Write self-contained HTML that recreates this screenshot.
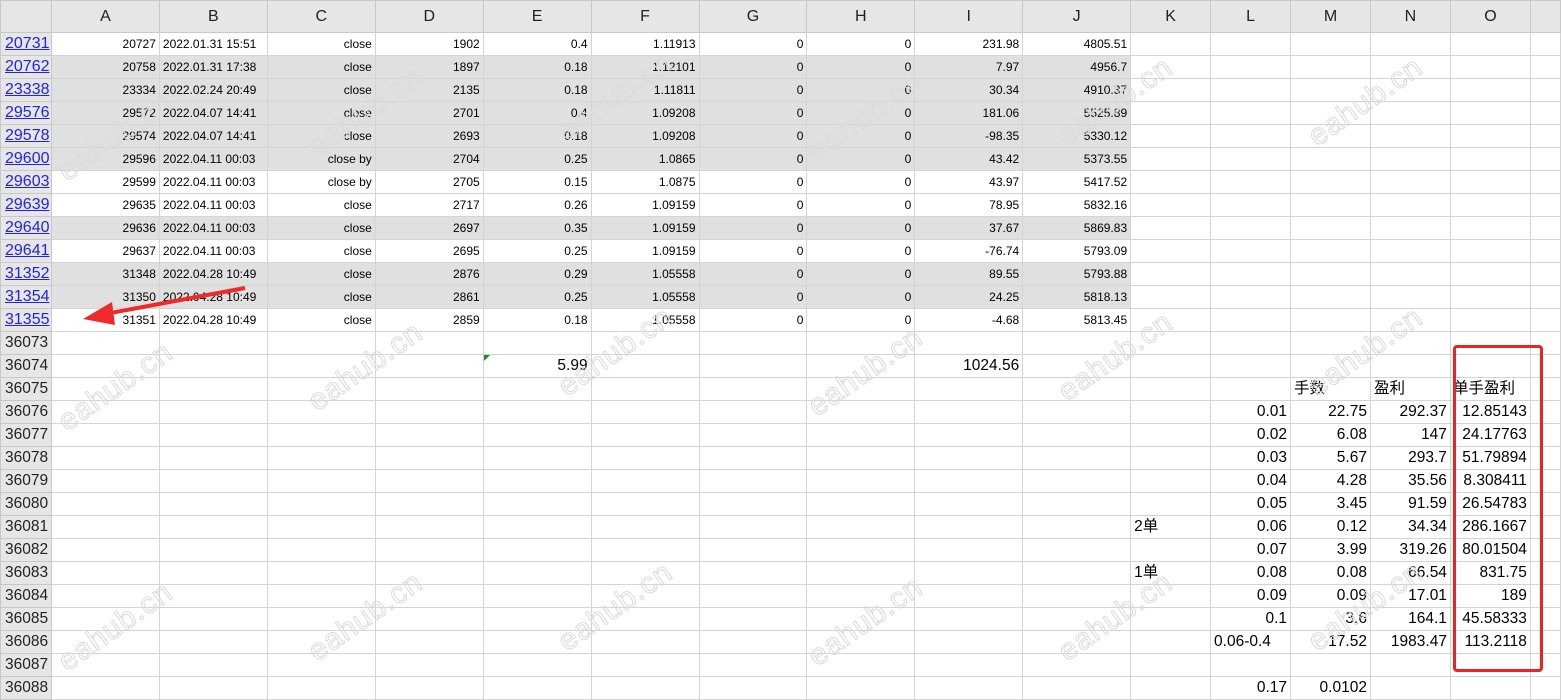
<!DOCTYPE html>
<html><head><meta charset="utf-8"><style>
body{margin:0;width:1561px;height:689px;overflow:hidden;background:#fff;font-family:"Liberation Sans","Noto Sans CJK SC",sans-serif;position:relative}
table{border-collapse:collapse;table-layout:fixed;position:absolute;left:0;top:0}
td{border:1px solid #d4d4d4;height:22px;padding:0 3px;white-space:nowrap;overflow:hidden;text-align:right;font-size:12px;color:#000;line-height:22px}
tr.h td{height:31px;background:#e6e6e6;text-align:center;font-size:16px;color:#222;border-color:#c8c8c8}
td.r{background:#e6e6e6;text-align:left;font-size:16px;padding:0 0 0 4px;border-color:#c8c8c8;color:#222}
td.l{color:#2222ee;text-decoration:underline}
tr.g td:not(.r):nth-child(-n+11){background:#e0e0e0}
tr.b td{font-size:15.5px}
td.t{text-align:left}
.wm{position:absolute;font-size:30px;color:transparent;-webkit-text-stroke:1px #dadada;transform:rotate(-35deg);font-family:"Liberation Sans",sans-serif;letter-spacing:1px}
</style></head><body>
<table>
<colgroup><col style="width:51px"><col style="width:108px"><col style="width:108px"><col style="width:108px"><col style="width:108px"><col style="width:108px"><col style="width:108px"><col style="width:108px"><col style="width:108px"><col style="width:108px"><col style="width:108px"><col style="width:80px"><col style="width:80px"><col style="width:80px"><col style="width:80px"><col style="width:80px"><col style="width:30px"></colgroup>
<tr class="h"><td style="background:#e6e6e6"></td><td>A</td><td>B</td><td>C</td><td>D</td><td>E</td><td>F</td><td>G</td><td>H</td><td>I</td><td>J</td><td>K</td><td>L</td><td>M</td><td>N</td><td>O</td><td></td></tr>
<tr><td class="r l">20731</td><td>20727</td><td class="t">2022.01.31 15:51</td><td>close</td><td>1902</td><td>0.4</td><td>1.11913</td><td>0</td><td>0</td><td>231.98</td><td>4805.51</td><td></td><td></td><td></td><td></td><td></td><td></td></tr>
<tr class="g"><td class="r l">20762</td><td>20758</td><td class="t">2022.01.31 17:38</td><td>close</td><td>1897</td><td>0.18</td><td>1.12101</td><td>0</td><td>0</td><td>7.97</td><td>4956.7</td><td></td><td></td><td></td><td></td><td></td><td></td></tr>
<tr class="g"><td class="r l">23338</td><td>23334</td><td class="t">2022.02.24 20:49</td><td>close</td><td>2135</td><td>0.18</td><td>1.11811</td><td>0</td><td>0</td><td>30.34</td><td>4910.37</td><td></td><td></td><td></td><td></td><td></td><td></td></tr>
<tr class="g"><td class="r l">29576</td><td>29572</td><td class="t">2022.04.07 14:41</td><td>close</td><td>2701</td><td>0.4</td><td>1.09208</td><td>0</td><td>0</td><td>181.06</td><td>5525.89</td><td></td><td></td><td></td><td></td><td></td><td></td></tr>
<tr class="g"><td class="r l">29578</td><td>29574</td><td class="t">2022.04.07 14:41</td><td>close</td><td>2693</td><td>0.18</td><td>1.09208</td><td>0</td><td>0</td><td>-98.35</td><td>5330.12</td><td></td><td></td><td></td><td></td><td></td><td></td></tr>
<tr class="g"><td class="r l">29600</td><td>29596</td><td class="t">2022.04.11 00:03</td><td>close by</td><td>2704</td><td>0.25</td><td>1.0865</td><td>0</td><td>0</td><td>43.42</td><td>5373.55</td><td></td><td></td><td></td><td></td><td></td><td></td></tr>
<tr><td class="r l">29603</td><td>29599</td><td class="t">2022.04.11 00:03</td><td>close by</td><td>2705</td><td>0.15</td><td>1.0875</td><td>0</td><td>0</td><td>43.97</td><td>5417.52</td><td></td><td></td><td></td><td></td><td></td><td></td></tr>
<tr><td class="r l">29639</td><td>29635</td><td class="t">2022.04.11 00:03</td><td>close</td><td>2717</td><td>0.26</td><td>1.09159</td><td>0</td><td>0</td><td>78.95</td><td>5832.16</td><td></td><td></td><td></td><td></td><td></td><td></td></tr>
<tr class="g"><td class="r l">29640</td><td>29636</td><td class="t">2022.04.11 00:03</td><td>close</td><td>2697</td><td>0.35</td><td>1.09159</td><td>0</td><td>0</td><td>37.67</td><td>5869.83</td><td></td><td></td><td></td><td></td><td></td><td></td></tr>
<tr><td class="r l">29641</td><td>29637</td><td class="t">2022.04.11 00:03</td><td>close</td><td>2695</td><td>0.25</td><td>1.09159</td><td>0</td><td>0</td><td>-76.74</td><td>5793.09</td><td></td><td></td><td></td><td></td><td></td><td></td></tr>
<tr class="g"><td class="r l">31352</td><td>31348</td><td class="t">2022.04.28 10:49</td><td>close</td><td>2876</td><td>0.29</td><td>1.05558</td><td>0</td><td>0</td><td>89.55</td><td>5793.88</td><td></td><td></td><td></td><td></td><td></td><td></td></tr>
<tr class="g"><td class="r l">31354</td><td>31350</td><td class="t">2022.04.28 10:49</td><td>close</td><td>2861</td><td>0.25</td><td>1.05558</td><td>0</td><td>0</td><td>24.25</td><td>5818.13</td><td></td><td></td><td></td><td></td><td></td><td></td></tr>
<tr><td class="r l">31355</td><td>31351</td><td class="t">2022.04.28 10:49</td><td>close</td><td>2859</td><td>0.18</td><td>1.05558</td><td>0</td><td>0</td><td>-4.68</td><td>5813.45</td><td></td><td></td><td></td><td></td><td></td><td></td></tr>
<tr class="b"><td class="r">36073</td><td></td><td></td><td></td><td></td><td></td><td></td><td></td><td></td><td></td><td></td><td></td><td></td><td></td><td></td><td></td><td></td></tr>
<tr class="b"><td class="r">36074</td><td></td><td></td><td></td><td></td><td>5.99</td><td></td><td></td><td></td><td>1024.56</td><td></td><td></td><td></td><td></td><td></td><td></td><td></td></tr>
<tr class="b"><td class="r">36075</td><td></td><td></td><td></td><td></td><td></td><td></td><td></td><td></td><td></td><td></td><td></td><td></td><td class="t">手数</td><td class="t">盈利</td><td class="t" style="padding-left:2px">单手盈利</td><td></td></tr>
<tr class="b"><td class="r">36076</td><td></td><td></td><td></td><td></td><td></td><td></td><td></td><td></td><td></td><td></td><td></td><td>0.01</td><td>22.75</td><td>292.37</td><td>12.85143</td><td></td></tr>
<tr class="b"><td class="r">36077</td><td></td><td></td><td></td><td></td><td></td><td></td><td></td><td></td><td></td><td></td><td></td><td>0.02</td><td>6.08</td><td>147</td><td>24.17763</td><td></td></tr>
<tr class="b"><td class="r">36078</td><td></td><td></td><td></td><td></td><td></td><td></td><td></td><td></td><td></td><td></td><td></td><td>0.03</td><td>5.67</td><td>293.7</td><td>51.79894</td><td></td></tr>
<tr class="b"><td class="r">36079</td><td></td><td></td><td></td><td></td><td></td><td></td><td></td><td></td><td></td><td></td><td></td><td>0.04</td><td>4.28</td><td>35.56</td><td>8.308411</td><td></td></tr>
<tr class="b"><td class="r">36080</td><td></td><td></td><td></td><td></td><td></td><td></td><td></td><td></td><td></td><td></td><td></td><td>0.05</td><td>3.45</td><td>91.59</td><td>26.54783</td><td></td></tr>
<tr class="b"><td class="r">36081</td><td></td><td></td><td></td><td></td><td></td><td></td><td></td><td></td><td></td><td></td><td class="t">2单</td><td>0.06</td><td>0.12</td><td>34.34</td><td>286.1667</td><td></td></tr>
<tr class="b"><td class="r">36082</td><td></td><td></td><td></td><td></td><td></td><td></td><td></td><td></td><td></td><td></td><td></td><td>0.07</td><td>3.99</td><td>319.26</td><td>80.01504</td><td></td></tr>
<tr class="b"><td class="r">36083</td><td></td><td></td><td></td><td></td><td></td><td></td><td></td><td></td><td></td><td></td><td class="t">1单</td><td>0.08</td><td>0.08</td><td>66.54</td><td>831.75</td><td></td></tr>
<tr class="b"><td class="r">36084</td><td></td><td></td><td></td><td></td><td></td><td></td><td></td><td></td><td></td><td></td><td></td><td>0.09</td><td>0.09</td><td>17.01</td><td>189</td><td></td></tr>
<tr class="b"><td class="r">36085</td><td></td><td></td><td></td><td></td><td></td><td></td><td></td><td></td><td></td><td></td><td></td><td>0.1</td><td>3.6</td><td>164.1</td><td>45.58333</td><td></td></tr>
<tr class="b"><td class="r">36086</td><td></td><td></td><td></td><td></td><td></td><td></td><td></td><td></td><td></td><td></td><td></td><td class="t">0.06-0.4</td><td>17.52</td><td>1983.47</td><td>113.2118</td><td></td></tr>
<tr class="b"><td class="r">36087</td><td></td><td></td><td></td><td></td><td></td><td></td><td></td><td></td><td></td><td></td><td></td><td></td><td></td><td></td><td></td><td></td></tr>
<tr class="b"><td class="r">36088</td><td></td><td></td><td></td><td></td><td></td><td></td><td></td><td></td><td></td><td></td><td></td><td>0.17</td><td>0.0102</td><td></td><td></td><td></td></tr>
</table>
<div style="position:absolute;left:484px;top:355px;width:0;height:0;border-top:6px solid #1a8a1a;border-right:6px solid transparent"></div>
<div style="position:absolute;left:1453px;top:345px;width:84px;height:321px;border:3px solid #ee2222;border-radius:4px"></div>
<svg style="position:absolute;left:0;top:0" width="1561" height="689"><line x1="245" y1="288" x2="105" y2="314" stroke="#ee2a2a" stroke-width="4"/><polygon points="83,319 112,302 115,325" fill="#ee2a2a"/></svg>
<div class="wm" style="left:50px;top:120px">eahub.cn</div>
<div class="wm" style="left:300px;top:95px">eahub.cn</div>
<div class="wm" style="left:550px;top:80px">eahub.cn</div>
<div class="wm" style="left:800px;top:100px">eahub.cn</div>
<div class="wm" style="left:1050px;top:85px">eahub.cn</div>
<div class="wm" style="left:1300px;top:85px">eahub.cn</div>
<div class="wm" style="left:50px;top:370px">eahub.cn</div>
<div class="wm" style="left:300px;top:350px">eahub.cn</div>
<div class="wm" style="left:550px;top:335px">eahub.cn</div>
<div class="wm" style="left:800px;top:355px">eahub.cn</div>
<div class="wm" style="left:1050px;top:340px">eahub.cn</div>
<div class="wm" style="left:1300px;top:335px">eahub.cn</div>
<div class="wm" style="left:50px;top:610px">eahub.cn</div>
<div class="wm" style="left:300px;top:600px">eahub.cn</div>
<div class="wm" style="left:550px;top:590px">eahub.cn</div>
<div class="wm" style="left:800px;top:605px">eahub.cn</div>
<div class="wm" style="left:1050px;top:600px">eahub.cn</div>
<div class="wm" style="left:1300px;top:590px">eahub.cn</div>
</body></html>
